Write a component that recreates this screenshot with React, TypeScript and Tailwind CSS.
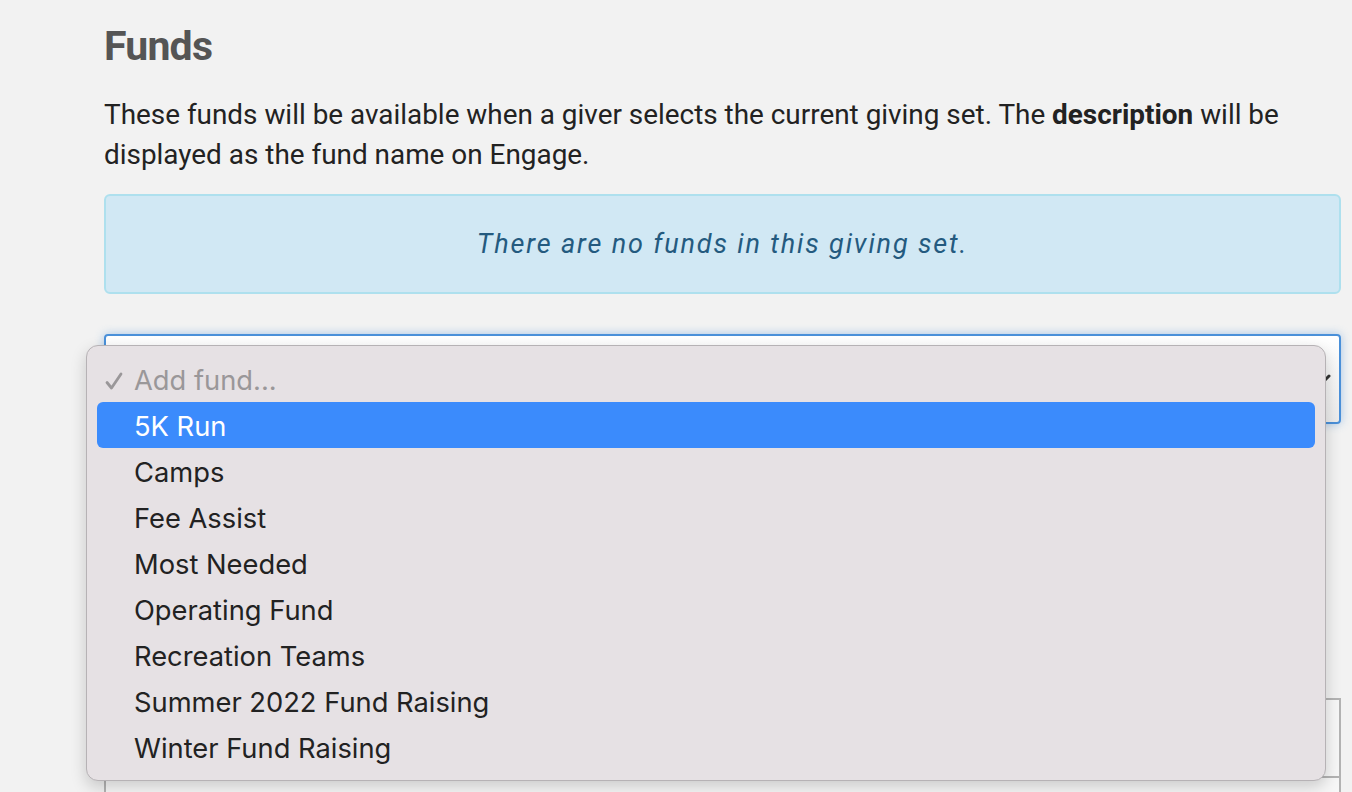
import React from 'react';

const funds = [
  '5K Run',
  'Camps',
  'Fee Assist',
  'Most Needed',
  'Operating Fund',
  'Recreation Teams',
  'Summer 2022 Fund Raising',
  'Winter Fund Raising',
];

export default function App() {
  return (
    <div className="min-h-screen w-full overflow-hidden bg-[#f2f2f2] font-['Roboto',sans-serif]">
      <div className="ml-[104px] mr-[11px] pt-[22px]">
        <h1 className="text-[41px] font-bold leading-[48px] tracking-[-0.8px] text-[#555555]">Funds</h1>

        <p className="mt-[25px] text-[27.9px] leading-[40px] text-[#222222]">
          These funds will be available when a giver selects the current giving set. The{' '}
          <strong className="font-bold">description</strong> will be displayed as the fund name on Engage.
        </p>

        <div className="mt-[19px] flex h-[100px] items-center justify-center rounded-[6px] border-2 border-[#aee0ee] bg-[#d1e8f4]">
          <span className="text-[27px] italic tracking-[1.85px] text-[#245a7f]">
            There are no funds in this giving set.
          </span>
        </div>

        <div className="relative mt-[40px]">
          <div className="flex h-[90px] items-center justify-end rounded-[4px] border-2 border-[#4a90d9] bg-gradient-to-b from-white to-[#ececec] pr-[8px] shadow-[0_0_10px_rgba(74,144,217,0.45)]">
            <svg width="12" height="12" viewBox="0 0 12 12" className="mt-[2px]">
              <path d="M2 10 L10 2" stroke="#333" strokeWidth="3" strokeLinecap="round" />
            </svg>
          </div>

          <div className="mt-[274px] h-[80px] border-2 border-[#b3b3b3] bg-[#f7f7f7]" />
          <div className="h-[40px] border-x-2 border-[#b3b3b3] bg-[#f7f7f7]" />

          <div className="absolute left-[-18px] right-[15px] top-[11px] rounded-[12px] border border-[#b6b2b5] bg-[#e6e1e4] px-[10px] pb-[10px] pt-[14px] shadow-[0_6px_16px_rgba(0,0,0,0.18)] font-['Inter',sans-serif]">
            <div className="flex h-[42px] items-center text-[27.3px] text-[#9a9799]">
              <span className="flex w-[37px] items-center pl-[8px]">
                <svg width="18" height="18" viewBox="0 0 18 18">
                  <path d="M2 10.5 L6.5 16 L16 2" fill="none" stroke="#9a9799" strokeWidth="2.8" strokeLinecap="round" strokeLinejoin="round" />
                </svg>
              </span>
              <span>Add fund...</span>
            </div>
            {funds.map((f, i) => (
              <div
                key={f}
                className={
                  i === 0
                    ? 'flex h-[46px] items-center rounded-[6px] bg-[#3b8bfc] pl-[37px] pt-[4px] text-[27.3px] text-white'
                    : 'flex h-[46px] items-center pl-[37px] pt-[4px] text-[27.3px] text-[#222222]'
                }
              >
                {f}
              </div>
            ))}
          </div>
        </div>
      </div>
    </div>
  );
}
